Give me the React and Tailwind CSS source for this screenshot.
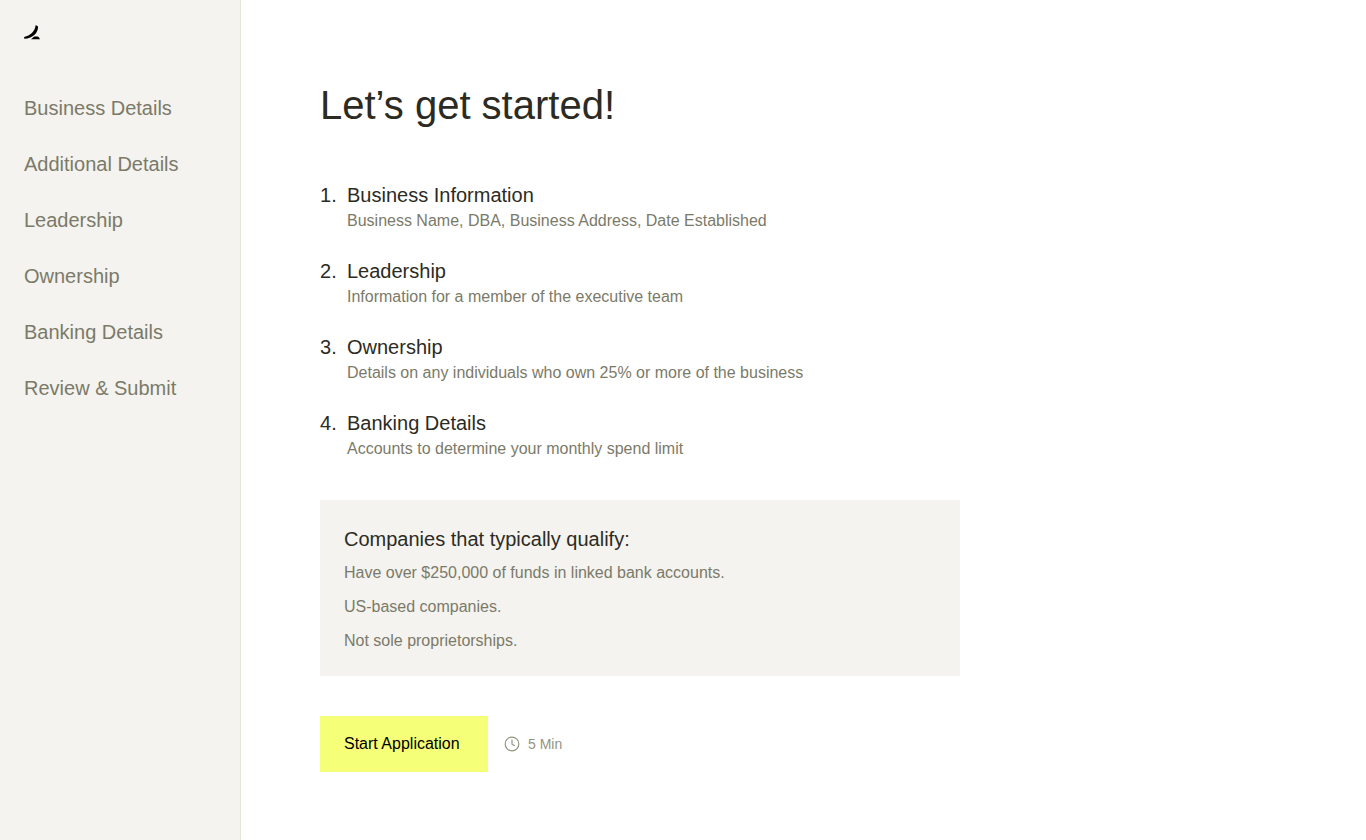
const nav = ["Business Details", "Additional Details", "Leadership", "Ownership", "Banking Details", "Review & Submit"];

const steps = [
  ["Business Information", "Business Name, DBA, Business Address, Date Established"],
  ["Leadership", "Information for a member of the executive team"],
  ["Ownership", "Details on any individuals who own 25% or more of the business"],
  ["Banking Details", "Accounts to determine your monthly spend limit"],
];

const criteria = ["Have over $250,000 of funds in linked bank accounts.", "US-based companies.", "Not sole proprietorships."];

export default function App() {
  return (
    <div className="flex min-h-screen bg-white font-['Liberation_Sans',Arial,sans-serif] text-[#2c2b23]">
      <aside className="w-[241px] shrink-0 border-r border-[#e6e5d6] bg-[#f4f3ef] px-6 pt-6">
        <a href="#home" aria-label="Home" className="block h-4 w-4">
          <svg viewBox="0 0 16 16" className="h-4 w-4" fill="#000">
            <path d="M11.7 1 14 2.4C14.4 8.2 9.2 14.5 0.2 14.7V12.9C6.2 11.5 11 7.6 11.7 1Z" />
            <path d="M7 15.2C8.4 14.4 9.4 13.5 10.2 12.6H14C14.9 13.3 15.6 14.2 16 15.2Z" />
          </svg>
        </a>
        <nav className="mt-[54px] flex flex-col gap-7 text-xl leading-7 text-[#7b7a69]">
          {nav.map((item) => (
            <a key={item} href="#section" className="whitespace-nowrap">{item}</a>
          ))}
        </nav>
      </aside>
      <main className="min-w-0 flex-1 px-[79px] pt-[81px] pb-16">
        <div className="max-w-[640px]">
          <h1 className="text-[40px] leading-[48px]">Let’s get started!</h1>
          <ol className="mt-13 flex flex-col gap-6">
            {steps.map(([title, text], i) => (
              <li key={title} className="flex text-xl leading-7">
                <span className="w-[27px] shrink-0">{i + 1}.</span>
                <div>
                  <h2>{title}</h2>
                  <p className="text-base leading-6 text-[#7b7a69]">{text}</p>
                </div>
              </li>
            ))}
          </ol>
          <section className="mt-[39px] bg-[#f4f3ef] px-6 pt-[25px] pb-[23px]">
            <h2 className="text-xl leading-7">Companies that typically qualify:</h2>
            <ul className="mt-2 flex flex-col gap-2.5 text-base leading-6 text-[#7b7a69]">
              {criteria.map((item) => (
                <li key={item}>{item}</li>
              ))}
            </ul>
          </section>
          <div className="mt-10 flex items-center gap-4">
            <button type="button" className="h-14 min-w-[168px] bg-[#f5ff78] px-6 text-left text-base text-black">Start Application</button>
            <div className="flex items-center gap-2 text-sm text-[#95947f]">
              <svg viewBox="0 0 16 16" className="h-4 w-4" fill="none" stroke="currentColor" strokeWidth="1.2">
                <circle cx="8" cy="8" r="6.8" />
                <path d="M8 3.8v4.4l2.8 1.6" />
              </svg>
              5 Min
            </div>
          </div>
        </div>
      </main>
    </div>
  );
}
